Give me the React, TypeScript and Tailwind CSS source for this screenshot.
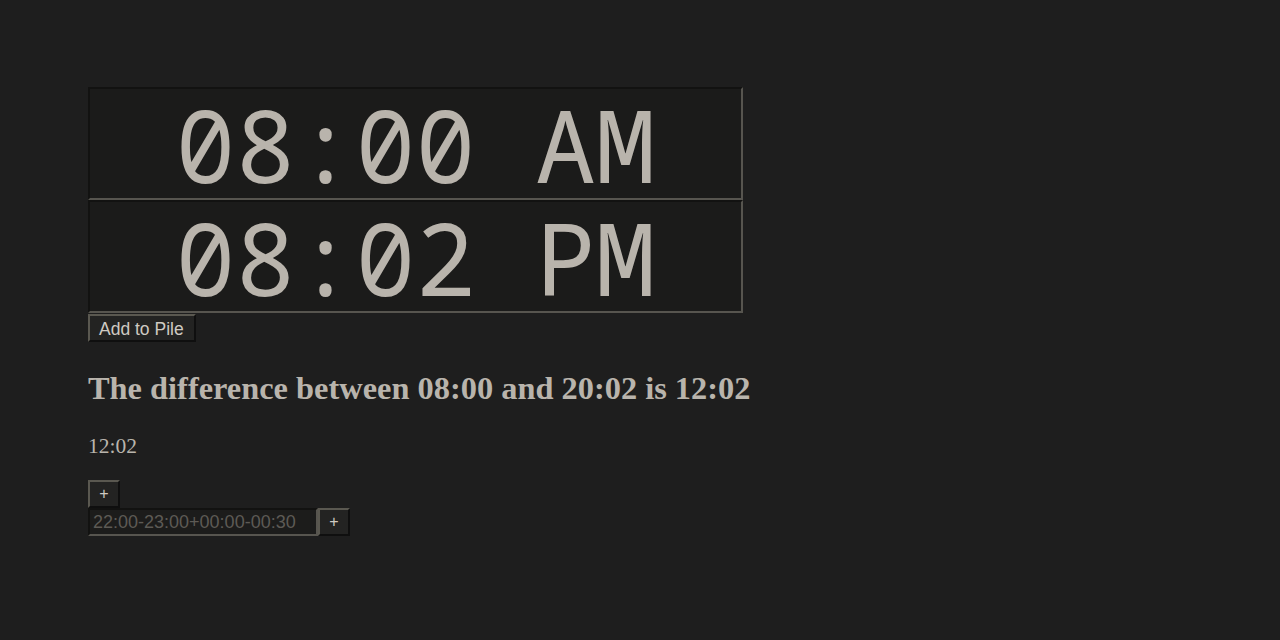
import React from "react";

const mono = "font-['Noto_Sans_Mono','DejaVu_Sans_Mono',monospace]";

function TimeBox({ value }: { value: string }) {
  return (
    <div
      className={`flex h-[113px] w-[655px] items-center justify-center border-2 border-t-[#121211] border-l-[#121211] border-b-[#57554f] border-r-[#57554f] bg-[#1b1b1a] text-[100px] leading-[100px] text-[#b9b4ac] ${mono}`}
    >
      <span className="whitespace-pre">{value}</span>
    </div>
  );
}

function OutsetButton({ children, className = "" }: { children: React.ReactNode; className?: string }) {
  return (
    <button
      className={`border-2 border-t-[#5a5850] border-l-[#5a5850] border-b-[#0f0f0f] border-r-[#0f0f0f] bg-[#232322] font-['Liberation_Sans',sans-serif] text-[#cfcac2] ${className}`}
    >
      {children}
    </button>
  );
}

export default function App() {
  return (
    <div className="min-h-[640px] w-full bg-[#1e1e1e] pl-[88px] pt-[87px] font-['Liberation_Serif',serif] text-[#b9b4ac]">
      <TimeBox value="08:00 AM" />
      <TimeBox value="08:02 PM" />
      <div className="mt-px">
        <OutsetButton className="h-[28px] w-[108px] pl-[9px] text-left text-[17.5px]">Add to Pile</OutsetButton>
      </div>
      <h1 className="mt-[28px] text-[32.4px] font-bold leading-[37px]">The difference between 08:00 and 20:02 is 12:02</h1>
      <p className="mt-[27px] text-[21.5px] leading-[24px]">12:02</p>
      <div className="mt-[22px]">
        <OutsetButton className="h-[28px] w-[32px] text-[16px]">+</OutsetButton>
      </div>
      <div className="flex items-end">
        <input
          placeholder="22:00-23:00+00:00-00:30"
          className="h-[28px] w-[230px] border-2 border-t-[#121211] border-l-[#121211] border-b-[#57554f] border-r-[#57554f] bg-[#1c1c1b] px-[3px] font-['Liberation_Sans',sans-serif] text-[18px] text-[#cfcac2] outline-none placeholder:text-[#5d5a55]"
        />
        <OutsetButton className="h-[28px] w-[32px] text-[16px]">+</OutsetButton>
      </div>
    </div>
  );
}
